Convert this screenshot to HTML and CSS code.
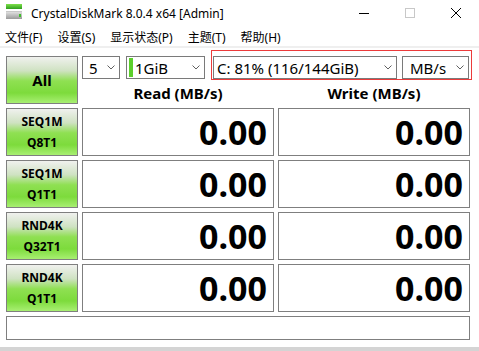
FILE: index.html
```html
<!DOCTYPE html>
<html lang="zh-CN">
<head>
  <meta charset="UTF-8" />
  <title>CrystalDiskMark 8.0.4 x64 [Admin]</title>
  <link rel="stylesheet" href="styles.css">
</head>
<body>
  <div class="window">
    <div class="titlebar">
      <svg class="app-icon" width="16" height="16" viewBox="0 0 16 16">
        <defs>
          <linearGradient id="bar" x1="0" y1="0" x2="0" y2="1">
            <stop offset="0" stop-color="#7de04a"/>
            <stop offset="1" stop-color="#2f9e1e"/>
          </linearGradient>
          <linearGradient id="drive" x1="0" y1="0" x2="0" y2="1">
            <stop offset="0" stop-color="#e8e8e8"/>
            <stop offset="1" stop-color="#9a9a9a"/>
          </linearGradient>
        </defs>
        <rect x="0" y="0" width="16" height="5" fill="url(#bar)"/>
        <rect x="0" y="7" width="16" height="8" fill="url(#drive)"/>
        <rect x="0" y="7" width="16" height="1" fill="#c8c8c8"/>
        <rect x="13" y="10" width="2" height="3" fill="#3fc02a"/>
      </svg>
      <span class="title">CrystalDiskMark 8.0.4 x64 [Admin]</span>
      <div class="controls">
        <span class="ctl"><svg width="10" height="10" viewBox="0 0 10 10"><path d="M0 5.5H10" stroke="#000" stroke-width="1"/></svg></span>
        <span class="ctl"><svg width="10" height="10" viewBox="0 0 10 10"><rect x="0.5" y="0.5" width="9" height="9" fill="none" stroke="#c8c8c8"/></svg></span>
        <span class="ctl"><svg width="10" height="10" viewBox="0 0 10 10"><path d="M0 0L10 10M10 0L0 10" stroke="#000" stroke-width="1"/></svg></span>
      </div>
    </div>

    <div class="menubar">
      <span>文件(F)</span>
      <span>设置(S)</span>
      <span>显示状态(P)</span>
      <span>主题(T)</span>
      <span>帮助(H)</span>
    </div>

    <div class="main">
      <div class="grid">
        <button class="test-btn all">All</button>
        <div class="toolbar">
          <div class="options">
            <div class="select count"><span class="val">5</span><svg class="chev" width="8" height="5" viewBox="0 0 8 5"><path d="M0.5 0.5L4 4L7.5 0.5" fill="none" stroke="#606060"/></svg></div>
            <div class="select size"><span class="mark"></span><span class="val">1GiB</span><svg class="chev" width="8" height="5" viewBox="0 0 8 5"><path d="M0.5 0.5L4 4L7.5 0.5" fill="none" stroke="#606060"/></svg></div>
            <div class="highlight">
              <div class="select drive"><span class="val">C: 81% (116/144GiB)</span><svg class="chev" width="8" height="5" viewBox="0 0 8 5"><path d="M0.5 0.5L4 4L7.5 0.5" fill="none" stroke="#606060"/></svg></div>
              <div class="select unit"><span class="val">MB/s</span><svg class="chev" width="8" height="5" viewBox="0 0 8 5"><path d="M0.5 0.5L4 4L7.5 0.5" fill="none" stroke="#606060"/></svg></div>
            </div>
          </div>
          <div class="heads">
            <div class="head">Read (MB/s)</div>
            <div class="head">Write (MB/s)</div>
          </div>
        </div>

        <button class="test-btn">SEQ1M<br>Q8T1</button>
        <div class="value">0.00</div>
        <div class="value">0.00</div>

        <button class="test-btn">SEQ1M<br>Q1T1</button>
        <div class="value">0.00</div>
        <div class="value">0.00</div>

        <button class="test-btn">RND4K<br>Q32T1</button>
        <div class="value">0.00</div>
        <div class="value">0.00</div>

        <button class="test-btn">RND4K<br>Q1T1</button>
        <div class="value">0.00</div>
        <div class="value">0.00</div>

        <div class="comment"></div>
      </div>
    </div>
  </div>
</body>
</html>
```

FILE: styles.css
```css
body {
  margin: 0;
  font-family: 'Noto Sans', 'Noto Sans CJK SC', sans-serif;
  color: #000;
  background-color: #fff;
}
.window {
  width: 479px;
  height: 351px;
  box-sizing: border-box;
  background-color: #fff;
  border-bottom: 4px solid #d4d4d4;
  overflow: hidden;
}
.titlebar {
  height: 27px;
  display: flex;
  align-items: center;
  padding-left: 6px;
  padding-bottom: 1px;
  box-sizing: border-box;
}
.app-icon {
  margin-top: -2px;
}
.title {
  margin-left: 9px;
  font-size: 12px;
}
.controls {
  margin-left: auto;
  display: flex;
  align-self: flex-start;
}
.ctl {
  width: 46px;
  height: 25px;
  display: flex;
  align-items: center;
  justify-content: center;
}
.menubar {
  height: 19px;
  display: flex;
  align-items: center;
  gap: 15px;
  padding-left: 5px;
  font-size: 12px;
  border-bottom: 2px solid #efefef;
}
.main {
  padding: 8px 0 0 6px;
}
.grid {
  display: grid;
  grid-template-columns: 72px 192px 192px;
  grid-auto-rows: 48px;
  gap: 4px;
}
.test-btn {
  margin: 0;
  padding: 0;
  border: 1px solid #7f7f7f;
  font-family: 'Noto Sans', sans-serif;
  font-weight: bold;
  font-size: 12px;
  line-height: 21px;
  color: #000;
  background: linear-gradient(#f0f1ee 0%, #cfe2c2 30%, #8fe052 52%, #7ddb3c 78%, #a8ef72 100%);
}
.test-btn.all {
  font-size: 15px;
}
.toolbar {
  grid-column: 2 / 4;
  display: flex;
  flex-direction: column;
}
.options {
  display: flex;
  height: 23px;
}
.select {
  box-sizing: border-box;
  height: 23px;
  border: 1px solid #7a7a7a;
  display: flex;
  align-items: center;
  font-size: 15px;
  padding: 0 4px 0 6px;
}
.select .chev {
  margin-left: auto;
}
.count {
  width: 38px;
}
.size {
  width: 79px;
  margin-left: 6px;
  padding-left: 2px;
}
.mark {
  width: 4px;
  height: 19px;
  background-color: #5ccf2c;
  margin-right: 2px;
}
.highlight {
  position: relative;
  display: flex;
  margin-left: 8px;
}
.highlight::after {
  content: "";
  position: absolute;
  top: -6px;
  left: -2px;
  right: -3px;
  bottom: -1px;
  border: 1px solid #ec3b3b;
}
.drive {
  width: 184px;
  padding-left: 3px;
}
.unit {
  width: 67px;
  margin-left: 5px;
  padding-left: 7px;
}
.heads {
  display: flex;
  gap: 4px;
  flex: 1;
}
.head {
  width: 192px;
  text-align: center;
  font-weight: bold;
  font-size: 15px;
  padding-top: 4px;
}
.value {
  border: 1px solid #7f7f7f;
  text-align: right;
  font-weight: bold;
  font-size: 34px;
  line-height: 46px;
  padding-right: 6px;
}
.comment {
  grid-column: 1 / 4;
  height: 24px;
  box-sizing: border-box;
  border: 1px solid #7f7f7f;
  align-self: start;
}
```
